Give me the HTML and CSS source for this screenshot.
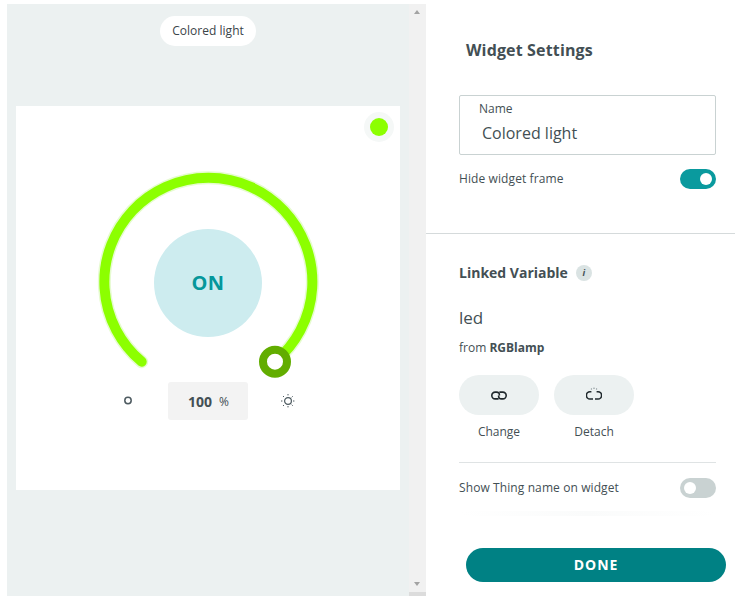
FILE: index.html
```html
<!DOCTYPE html>
<html lang="en">

<head>
    <meta charset="UTF-8">
    <meta name="viewport" content="width=device-width, initial-scale=1.0">
    <title>Widget Settings</title>
    <link rel="stylesheet" href="styles.css">
</head>

<body>
    <div class="layout">
        <div class="preview">
            <div class="preview-inner">
                <div class="widget-name">Colored light</div>
                <div class="card">
                    <span class="status-dot"></span>
                    <svg class="dial" width="240" height="220" viewBox="0 0 240 220">
                        <path class="dial-glow" d="M53.7 201.7 A104 104 0 1 1 187 201.7" />
                        <path class="dial-arc" d="M53.7 201.7 A104 104 0 1 1 187 201.7" />
                        <circle class="dial-center" cx="120" cy="123" r="54" />
                        <text class="dial-label" x="120" y="130" text-anchor="middle">ON</text>
                        <circle class="dial-knob" cx="187" cy="201.7" r="12" />
                    </svg>
                    <div class="brightness">
                        <svg class="bright-icon" width="16" height="16" viewBox="0 0 16 16">
                            <circle cx="8" cy="7.5" r="3.2" />
                        </svg>
                        <div class="bright-value"><b>100</b><span>%</span></div>
                        <svg class="bright-icon" width="16" height="16" viewBox="0 0 16 16">
                            <circle cx="8" cy="8" r="3.4" />
                            <path class="sun-rays" d="M8 1v2M8 13v2M1 8h2M13 8h2M3 3l1.3 1.3M11.7 11.7L13 13M3 13l1.3-1.3M11.7 4.3L13 3" />
                        </svg>
                    </div>
                </div>
            </div>
            <div class="scrollbar">
                <span class="arrow-up"></span>
                <span class="arrow-down"></span>
                <span class="scroll-end"></span>
            </div>
        </div>

        <div class="settings">
            <section class="settings-top">
                <h2 class="settings-title">Widget Settings</h2>
                <div class="name-field">
                    <label class="name-label">Name</label>
                    <div class="name-value">Colored light</div>
                </div>
                <div class="toggle-row">
                    <span class="toggle-text">Hide widget frame</span>
                    <span class="toggle toggle-on"></span>
                </div>
            </section>

            <section class="linked">
                <h3 class="linked-title">Linked Variable <span class="info">i</span></h3>
                <div class="var-name">led</div>
                <div class="var-from">from <b>RGBlamp</b></div>
                <div class="actions">
                    <div class="action">
                        <span class="action-btn">
                            <svg width="16" height="10" viewBox="0 0 16 10">
                                <path d="M7.6 8.9H4.2a3.4 3.4 0 0 1 0-6.8h1.4c2 0 3 1.4 2.8 3.4" />
                                <path d="M8.4 2.1h3.4a3.4 3.4 0 0 1 0 6.8h-1.4c-2 0-3-1.4-2.8-3.4" />
                            </svg>
                        </span>
                        <span class="action-label">Change</span>
                    </div>
                    <div class="action">
                        <span class="action-btn">
                            <svg width="16" height="16" viewBox="0 0 16 16">
                                <path d="M5.4 4.8H4a3.6 3.6 0 0 0 0 7.2h3" />
                                <path d="M9 12h3a3.6 3.6 0 0 0 0-7.2h-1.4" />
                                <path class="detach-dots" d="M5.4 1.4v1.2M8 .6V2M10.6 1.4v1.2" />
                            </svg>
                        </span>
                        <span class="action-label">Detach</span>
                    </div>
                </div>
                <div class="toggle-row thing-row">
                    <span class="toggle-text">Show Thing name on widget</span>
                    <span class="toggle"></span>
                </div>
                <div class="fade-line"></div>
            </section>

            <button class="done">DONE</button>
        </div>
    </div>
</body>

</html>
```

FILE: styles.css
```css
:root {
    --teal: #008184;
    --teal-light: #0a9a9e;
    --panel-bg: #ecf1f1;
    --text-color: #434f54;
    --green: #8cff00;
}

body {
    margin: 0;
    background-color: #fff;
    color: var(--text-color);
    font-family: 'Open Sans', sans-serif;
}

.layout {
    display: flex;
    height: 596px;
    overflow: hidden;
}

/* Left preview column */
.preview {
    display: flex;
    width: 419px;
    margin-left: 7px;
    padding-top: 4px;
    box-sizing: border-box;
    flex-shrink: 0;
}

.preview-inner {
    width: 402px;
    background-color: var(--panel-bg);
    padding: 12px 9px 0;
    box-sizing: border-box;
    display: flex;
    flex-direction: column;
    align-items: center;
}

.widget-name {
    height: 30px;
    line-height: 30px;
    padding: 0 12px;
    background-color: #fff;
    border-radius: 15px;
    font-size: 12px;
    letter-spacing: 0.03px;
    color: #3a4449;
    white-space: nowrap;
}

.card {
    position: relative;
    width: 384px;
    height: 384px;
    margin-top: 60px;
    padding-top: 54px;
    box-sizing: border-box;
    background-color: #fff;
    display: flex;
    flex-direction: column;
    align-items: center;
}

.status-dot {
    position: absolute;
    top: 12px;
    right: 12px;
    width: 18px;
    height: 18px;
    border-radius: 50%;
    background-color: var(--green);
    box-shadow: 0 0 0 6px #f5f8f7;
}

.dial {
    display: block;
    flex-shrink: 0;
}

.dial-arc,
.dial-glow {
    fill: none;
    stroke-linecap: round;
}

.dial-arc {
    stroke: var(--green);
    stroke-width: 10px;
}

.dial-glow {
    stroke: #e6fbd0;
    stroke-width: 13px;
}

.dial-center {
    fill: #cdecef;
}

.dial-label {
    fill: #05979b;
    font-size: 20px;
    font-weight: 700;
    letter-spacing: 0.5px;
}

.dial-knob {
    fill: #fff;
    stroke: #62ad00;
    stroke-width: 8px;
}

.brightness {
    display: flex;
    align-items: center;
    gap: 32px;
    margin-top: 2px;
}

.bright-icon {
    fill: none;
    stroke: #4e5b61;
    stroke-width: 1.2px;
}

.bright-icon:first-child circle {
    stroke-width: 1.5px;
}

.sun-rays {
    stroke-width: 1px;
    stroke-dasharray: 1.4 0.6;
}

.bright-value {
    width: 80px;
    height: 38px;
    padding-left: 1px;
    box-sizing: border-box;
    background-color: #f3f3f3;
    border-radius: 3px;
    display: flex;
    align-items: center;
    justify-content: center;
    gap: 7px;
    font-size: 14px;
}

.bright-value span {
    font-size: 12px;
    padding-top: 1px;
}

/* Fake browser scrollbar */
.scrollbar {
    position: relative;
    width: 17px;
    background-color: #f1f1f1;
}

.arrow-up,
.arrow-down {
    position: absolute;
    left: 5px;
    width: 0;
    height: 0;
    border-left: 3.5px solid transparent;
    border-right: 3.5px solid transparent;
}

.arrow-up {
    top: 6px;
    border-bottom: 4px solid #a3a3a3;
}

.arrow-down {
    bottom: 10px;
    border-top: 4px solid #a3a3a3;
}

.scroll-end {
    position: absolute;
    left: 0;
    right: 0;
    bottom: 0;
    height: 4px;
    background-color: #dcdcdc;
}

/* Right settings column */
.settings {
    flex: 1;
    position: relative;
    min-width: 0;
}

.settings-top {
    padding: 40px 19px 0 33px;
    height: 234px;
    box-sizing: border-box;
    border-bottom: 1px solid #d5dadb;
}

.settings-title {
    margin: 0 0 0 7px;
    font-size: 16px;
    line-height: 20px;
    font-weight: 700;
    letter-spacing: 0.15px;
}

.name-field {
    margin-top: 35px;
    height: 60px;
    box-sizing: border-box;
    border: 1px solid #c9d2d2;
    border-radius: 2px;
    padding: 5px 0 0 19px;
}

.name-label {
    display: block;
    font-size: 12px;
    line-height: 16px;
}

.name-value {
    margin: 5px 0 0 3px;
    font-size: 16px;
    line-height: 22px;
}

.toggle-row {
    display: flex;
    align-items: center;
    justify-content: space-between;
    margin-top: 14px;
    height: 20px;
    font-size: 12px;
    letter-spacing: 0.1px;
}

.toggle-text {
    margin-bottom: 2px;
}

.toggle {
    position: relative;
    width: 36px;
    height: 20px;
    border-radius: 10px;
    background-color: #c9d2d2;
}

.toggle::after {
    content: "";
    position: absolute;
    top: 4px;
    left: 4px;
    width: 12px;
    height: 12px;
    border-radius: 50%;
    background-color: #fff;
}

.toggle-on {
    background-color: var(--teal-light);
}

.toggle-on::after {
    left: 20px;
}

.linked {
    padding: 29px 19px 0 33px;
}

.linked-title {
    margin: 0;
    display: flex;
    align-items: center;
    gap: 8px;
    font-size: 14px;
    line-height: 19px;
    font-weight: 700;
}

.info {
    width: 16px;
    height: 16px;
    border-radius: 50%;
    background-color: #dae3e3;
    font-size: 9px;
    font-style: italic;
    line-height: 16px;
    text-align: center;
}

.var-name {
    margin-top: 25px;
    font-size: 17px;
    line-height: 22px;
}

.var-from {
    margin-top: 11px;
    font-size: 12px;
    line-height: 16px;
}

.actions {
    display: flex;
    gap: 15px;
    margin-top: 19px;
}

.action {
    display: flex;
    flex-direction: column;
    align-items: center;
    width: 80px;
}

.action-btn {
    width: 80px;
    height: 40px;
    border-radius: 20px;
    background-color: var(--panel-bg);
    display: flex;
    align-items: center;
    justify-content: center;
}

.action-btn svg {
    fill: none;
    stroke: #1f282c;
    stroke-width: 1.6px;
}

.action-btn .detach-dots {
    stroke: #7d888c;
    stroke-width: 1px;
}

.action-label {
    margin-top: 9px;
    font-size: 12px;
    line-height: 16px;
}

.thing-row {
    margin-top: 22px;
    padding-top: 15px;
    box-sizing: content-box;
    border-top: 1px solid #dfe3e4;
}

.fade-line {
    height: 5px;
    margin-top: 13px;
    background: linear-gradient(to right, #fff, #fafbfb 50%, #fff);
}

.done {
    position: absolute;
    left: 40px;
    top: 548px;
    width: 260px;
    height: 34px;
    padding: 0 0 2px;
    border: 0;
    border-radius: 17px;
    background-color: var(--teal);
    color: #fff;
    font-family: inherit;
    font-size: 14px;
    font-weight: 700;
    letter-spacing: 1px;
}
```
